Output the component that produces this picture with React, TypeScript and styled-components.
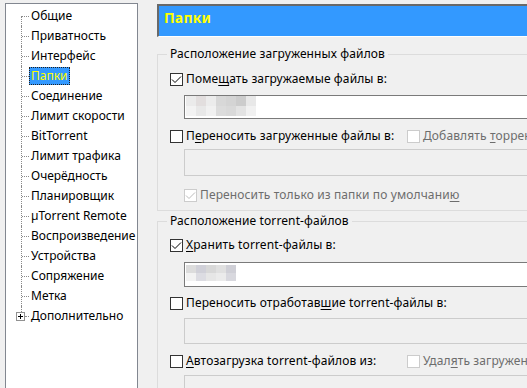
import React from "react";
import styled, { createGlobalStyle } from "styled-components";

const GlobalStyle = createGlobalStyle`
  html, body {
    margin: 0;
    padding: 0;
    background: #f0f0f0;
    overflow: hidden;
  }
  body {
    font-family: "Noto Sans", "Open Sans", sans-serif;
    font-size: 12px;
    color: #000;
  }
`;

const Window = styled.div`
  display: flex;
  align-items: flex-start;
  height: 388px;
  overflow: hidden;
`;

// ---- left tree ----
const TreePanel = styled.div`
  flex: none;
  box-sizing: border-box;
  width: 133px;
  height: 400px;
  margin: 3px 0 0 5px;
  padding-top: 2px;
  background: #fff;
  border: 1px solid #828790;
  border-bottom: none;
  overflow: hidden;
`;

const TreeRow = styled.div`
  display: flex;
  align-items: center;
  height: 20px;
`;

const Connector = styled.span<{ $first?: boolean; $last?: boolean }>`
  position: relative;
  flex: none;
  width: 23px;
  height: 20px;
  &::before {
    content: "";
    position: absolute;
    left: 15px;
    top: ${(p) => (p.$first ? "10px" : "0")};
    height: ${(p) => (p.$last ? "6px" : p.$first ? "10px" : "20px")};
    border-left: 1px dotted #8a8a8a;
  }
  &::after {
    content: "";
    position: absolute;
    left: ${(p) => (p.$last ? "19px" : "16px")};
    top: 10px;
    width: ${(p) => (p.$last ? "4px" : "7px")};
    border-top: 1px dotted #8a8a8a;
  }
`;

const ExpandBox = styled.span`
  position: absolute;
  left: 10px;
  top: 6px;
  z-index: 1;
  box-sizing: border-box;
  width: 9px;
  height: 9px;
  border: 1px solid #919191;
  background: #fff;
  display: flex;
  svg {
    display: block;
  }
`;

const TreeLabel = styled.span<{ $selected?: boolean }>`
  display: inline-block;
  box-sizing: border-box;
  height: 18px;
  line-height: 16px;
  padding: 0 1px;
  white-space: nowrap;
  border: 1px ${(p) => (p.$selected ? "dotted #202020" : "solid transparent")};
  background: ${(p) => (p.$selected ? "#3399ff" : "transparent")};
  color: ${(p) => (p.$selected ? "#ffff00" : "#000")};
`;

// ---- right side ----
const Pane = styled.div`
  flex: none;
  width: 400px;
  margin-left: 19px;
  letter-spacing: 0.12px;
`;

const PageHeader = styled.div`
  box-sizing: border-box;
  height: 33px;
  margin-top: 4px;
  padding: 4px 0 0 5px;
  line-height: 16px;
  font-size: 14px;
  font-weight: bold;
  letter-spacing: 0.2px;
  background: #3399ff;
  border-top: 2px solid #696969;
  border-left: 2px solid #696969;
  border-bottom: 1px solid #fff;
  color: #ffff00;
`;

const Group = styled.fieldset<{ $top: number }>`
  margin: ${(p) => p.$top}px 0 0 0;
  padding: 0 0 5px 12px;
  min-width: 0;
  border: 1px solid #dcdcdc;
  border-right: none;
`;

const GroupTitle = styled.legend`
  margin-left: -3px;
  padding: 0 3px;
  line-height: 16px;
`;

const Row = styled.div<{ $mt: number; $indent?: number }>`
  display: flex;
  align-items: center;
  height: 20px;
  margin-top: ${(p) => p.$mt}px;
  padding-left: ${(p) => p.$indent ?? 0}px;
  white-space: nowrap;
`;

const RowPart = styled.div<{ $width?: number }>`
  display: flex;
  align-items: center;
  flex: none;
  width: ${(p) => (p.$width ? `${p.$width}px` : "auto")};
`;

const Box = styled.span<{ $disabled?: boolean }>`
  flex: none;
  box-sizing: border-box;
  width: 13px;
  height: 13px;
  border: 1px solid ${(p) => (p.$disabled ? "#cccccc" : "#333333")};
  background: #fff;
  svg {
    display: block;
  }
`;

const Caption = styled.span<{ $disabled?: boolean }>`
  margin-left: 3px;
  line-height: 16px;
  color: ${(p) => (p.$disabled ? "#6d6d6d" : "#000")};
`;

const Key = styled.u`
  text-decoration: underline;
  text-underline-offset: 2px;
`;

const Field = styled.div<{ $mt: number; $h: number; $disabled?: boolean }>`
  box-sizing: border-box;
  width: 400px;
  height: ${(p) => p.$h}px;
  margin: ${(p) => p.$mt}px 0 0 14px;
  padding: 0 0 0 1px;
  border: 1px solid ${(p) => (p.$disabled ? "#cccccc" : "#7a7a7a")};
  background: ${(p) => (p.$disabled ? "#f0f0f0" : "#fff")};
`;

const Mosaic = styled.div<{ $cols: number; $cell: number; $mt: number }>`
  display: grid;
  grid-template-columns: repeat(${(p) => p.$cols}, 10px);
  grid-auto-rows: ${(p) => p.$cell}px;
  margin-top: ${(p) => p.$mt}px;
`;

const Cell = styled.span<{ $color: string }>`
  background: ${(p) => p.$color};
`;

const treeItems = [
  "Общие",
  "Приватность",
  "Интерфейс",
  "Папки",
  "Соединение",
  "Лимит скорости",
  "BitTorrent",
  "Лимит трафика",
  "Очерёдность",
  "Планировщик",
  "µTorrent Remote",
  "Воспроизведение",
  "Устройства",
  "Сопряжение",
  "Метка",
  "Дополнительно",
];

const blurDownloads = [
  "#ebebeb", "#e2dede", "#ececec", "#d8d8d8", "#d4d4d4", "#cccccc", "#e8e8e8",
  "#f3f3f3", "#e8e8e8", "#f1f1f1", "#dcdcdc", "#d9d9d9", "#e3e3e3", "#f1f1f1",
];

const blurTorrents = [
  "#dcdcdc", "#d0d0d8", "#d8d8d8", "#e0e0e0", "#cfcfd6",
  "#f2f2f2", "#dcdce2", "#e6e6e6", "#ebebeb", "#d8d8de",
];

const Check = ({ checked, disabled }: { checked?: boolean; disabled?: boolean }) => (
  <Box $disabled={disabled}>
    {checked && (
      <svg width="11" height="11" viewBox="0 0 11 11">
        <polyline
          points="1,5.5 4,8.5 10,2.5"
          fill="none"
          stroke={disabled ? "#bcbcbc" : "#000"}
          strokeWidth="1"
        />
      </svg>
    )}
  </Box>
);

const Tree = () => (
  <TreePanel>
    {treeItems.map((name, i) => {
      const last = i === treeItems.length - 1;
      return (
        <TreeRow key={name}>
          <Connector $first={i === 0} $last={last}>
            {last && (
              <ExpandBox>
                <svg width="7" height="7" viewBox="0 0 7 7">
                  <rect x="1" y="3" width="5" height="1" fill="#000" />
                  <rect x="3" y="1" width="1" height="5" fill="#000" />
                </svg>
              </ExpandBox>
            )}
          </Connector>
          <TreeLabel $selected={name === "Папки"}>{name}</TreeLabel>
        </TreeRow>
      );
    })}
  </TreePanel>
);

export default function App() {
  return (
    <>
      <GlobalStyle />
      <Window>
        <Tree />
        <Pane>
          <PageHeader>Папки</PageHeader>

          <Group $top={9}>
            <GroupTitle>Расположение загруженных файлов</GroupTitle>
            <Row $mt={7}>
              <Check checked />
              <Caption>
                Поме<Key>щ</Key>ать загружаемые файлы в:
              </Caption>
            </Row>
            <Field $mt={6} $h={24}>
              <Mosaic $cols={7} $cell={10} $mt={0}>
                {blurDownloads.map((c, i) => (
                  <Cell key={i} $color={c} />
                ))}
              </Mosaic>
            </Field>
            <Row $mt={7}>
              <RowPart $width={237}>
                <Check />
                <Caption>
                  П<Key>е</Key>реносить загруженные файлы в:
                </Caption>
              </RowPart>
              <RowPart>
                <Check disabled />
                <Caption $disabled>
                  Добавлять <Key>т</Key>оррент-файлы
                </Caption>
              </RowPart>
            </Row>
            <Field $mt={3} $h={27} $disabled />
            <Row $mt={9} $indent={14}>
              <Check checked disabled />
              <Caption $disabled>
                Переносить только из папки по умолчани<Key>ю</Key>
              </Caption>
            </Row>
          </Group>

          <Group $top={2}>
            <GroupTitle>Расположение torrent-файлов</GroupTitle>
            <Row $mt={6}>
              <Check checked />
              <Caption>
                <Key>Х</Key>ранить torrent-файлы в:
              </Caption>
            </Row>
            <Field $mt={7} $h={25}>
              <Mosaic $cols={5} $cell={8} $mt={2}>
                {blurTorrents.map((c, i) => (
                  <Cell key={i} $color={c} />
                ))}
              </Mosaic>
            </Field>
            <Row $mt={6}>
              <Check />
              <Caption>
                Переносить отработав<Key>ш</Key>ие torrent-файлы в:
              </Caption>
            </Row>
            <Field $mt={5} $h={26} $disabled />
            <Row $mt={7}>
              <RowPart $width={237}>
                <Check />
                <Caption>
                  <Key>А</Key>втозагрузка torrent-файлов из:
                </Caption>
              </RowPart>
              <RowPart>
                <Check disabled />
                <Caption $disabled>
                  Удал<Key>я</Key>ть загруженные torrent-файлы
                </Caption>
              </RowPart>
            </Row>
            <Field $mt={4} $h={26} $disabled />
          </Group>
        </Pane>
      </Window>
    </>
  );
}
